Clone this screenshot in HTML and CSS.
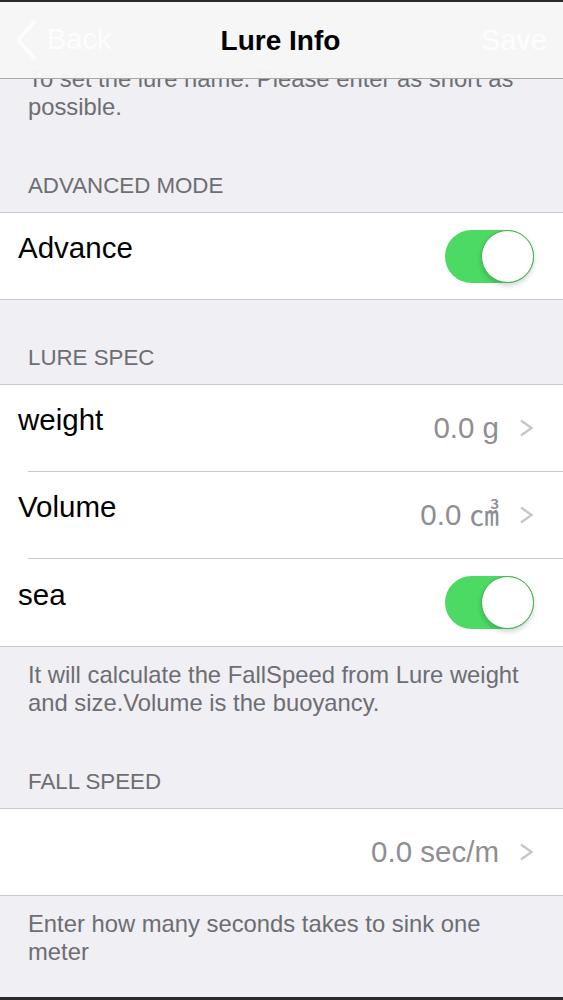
FILE: index.html
```html
<!DOCTYPE html>
<html lang="en">
<head>
    <meta charset="UTF-8">
    <meta name="viewport" content="width=device-width, initial-scale=1.0">
    <title>Lure Info</title>
    <link rel="stylesheet" href="styles.css">
</head>
<body>
    <div class="screen">
        <!-- Navigation bar (floats over the scrolled content) -->
        <div class="navbar">
            <div class="nav-back">
                <svg class="back-chevron" width="24" height="40" viewBox="0 0 24 40">
                    <polyline points="20,2 4,20 20,38" fill="none" stroke="#fdfdfd" stroke-width="3.5" stroke-linecap="round" stroke-linejoin="round"/>
                </svg>
                <span>Back</span>
            </div>
            <div class="nav-title">Lure Info</div>
            <div class="nav-save">Save</div>
        </div>

        <div class="content">
            <p class="footer first">To set the lure name. Please enter as short as possible.</p>

            <!-- Advanced mode -->
            <div class="header gap-after-footer">Advanced Mode</div>
            <div class="group">
                <div class="cell">
                    <span class="cell-label">Advance</span>
                    <div class="switch on"><div class="knob"></div></div>
                </div>
            </div>

            <!-- Lure spec -->
            <div class="header gap-after-group">Lure Spec</div>
            <div class="group">
                <div class="cell">
                    <span class="cell-label">weight</span>
                    <span class="cell-value">0.0 g</span>
                    <svg class="chevron" width="15" height="18" viewBox="0 0 15 18">
                        <polyline points="2,1.5 12.5,9 2,16.5" fill="none" stroke="#c7c7cc" stroke-width="2.4"/>
                    </svg>
                </div>
                <div class="cell">
                    <span class="cell-label">Volume</span>
                    <span class="cell-value">0.0 ㎤</span>
                    <svg class="chevron" width="15" height="18" viewBox="0 0 15 18">
                        <polyline points="2,1.5 12.5,9 2,16.5" fill="none" stroke="#c7c7cc" stroke-width="2.4"/>
                    </svg>
                </div>
                <div class="cell last">
                    <span class="cell-label">sea</span>
                    <div class="switch on"><div class="knob"></div></div>
                </div>
            </div>
            <p class="footer">It will calculate the FallSpeed from Lure weight and size.Volume is the buoyancy.</p>

            <!-- Fall speed -->
            <div class="header gap-after-footer">Fall Speed</div>
            <div class="group">
                <div class="cell">
                    <span class="cell-value">0.0 sec/m</span>
                    <svg class="chevron" width="15" height="18" viewBox="0 0 15 18">
                        <polyline points="2,1.5 12.5,9 2,16.5" fill="none" stroke="#c7c7cc" stroke-width="2.4"/>
                    </svg>
                </div>
            </div>
            <p class="footer">Enter how many seconds takes to sink one meter</p>
        </div>
    </div>
</body>
</html>
```

FILE: styles.css
```css
/* General */
body {
    margin: 0;
    font-family: "Liberation Sans", Arial, "Noto Sans CJK JP", sans-serif;
    background: #2a2a2a;
}

.screen {
    position: relative;
    width: 563px;
    height: 1000px;
    box-sizing: border-box;
    border-top: 2px solid #2a2a2a;
    border-bottom: 3px solid #2a2a2a;
    background: #efeff4;
    overflow: hidden;
}

/* Navigation bar */
.navbar {
    position: absolute;
    top: 0;
    left: 0;
    right: 0;
    height: 76px;
    background: rgba(246, 246, 247, 0.98);
    border-bottom: 1px solid #a8a8ab;
    display: flex;
    align-items: center;
    justify-content: space-between;
    padding: 0 16px 0 14px;
    z-index: 2;
}

.nav-back {
    display: flex;
    align-items: center;
    gap: 9px;
    width: 130px;
    color: #fdfdfd;
    font-size: 29px;
    margin-top: -1px;
}

.nav-title {
    font-size: 28px;
    font-weight: bold;
    color: #000;
    margin-top: 2px;
}

.nav-save {
    width: 130px;
    text-align: right;
    color: #fdfdfd;
    font-size: 29px;
}

/* Content */
.content {
    padding-top: 63px;
}

.footer {
    margin: 0;
    padding: 0 28px;
    font-size: 23.8px;
    line-height: 28px;
    color: #6d6d72;
}

.group + .footer {
    margin-top: 14px;
}

.header {
    padding: 0 28px;
    font-size: 22.3px;
    line-height: 28px;
    color: #6d6d72;
    text-transform: uppercase;
    margin-bottom: 12px;
}

.header.gap-after-footer {
    margin-top: 51px;
}

.header.gap-after-group {
    margin-top: 44px;
}

/* Table groups */
.group {
    background: #ffffff;
    border-top: 1px solid #c8c7cc;
    border-bottom: 1px solid #c8c7cc;
}

.cell {
    height: 86px;
    display: flex;
    align-items: center;
    padding: 0 29px 0 18px;
}

.cell.last {
    height: 87px;
}

.cell + .cell {
    border-top: 1px solid #c8c7cc;
    margin-left: 28px;
    padding-left: 0;
}

.cell + .cell .cell-label {
    margin-left: -10px;
}

.cell-label {
    font-size: 29.5px;
    line-height: 36px;
    color: #000;
    margin-bottom: 16px;
}

.cell-value {
    margin-left: auto;
    font-size: 29.5px;
    line-height: 36px;
    color: #8e8e93;
}

.chevron {
    margin-left: 20px;
}

/* Switch */
.switch {
    margin-left: auto;
    position: relative;
    width: 89px;
    height: 53px;
    border-radius: 27px;
    background: #4cd964;
}

.switch .knob {
    position: absolute;
    top: 0;
    right: 0;
    width: 51px;
    height: 51px;
    border-radius: 50%;
    background: #ffffff;
    border: 1px solid #3fae54;
    box-shadow: 0 3px 5px rgba(0, 0, 0, 0.16);
}
```
